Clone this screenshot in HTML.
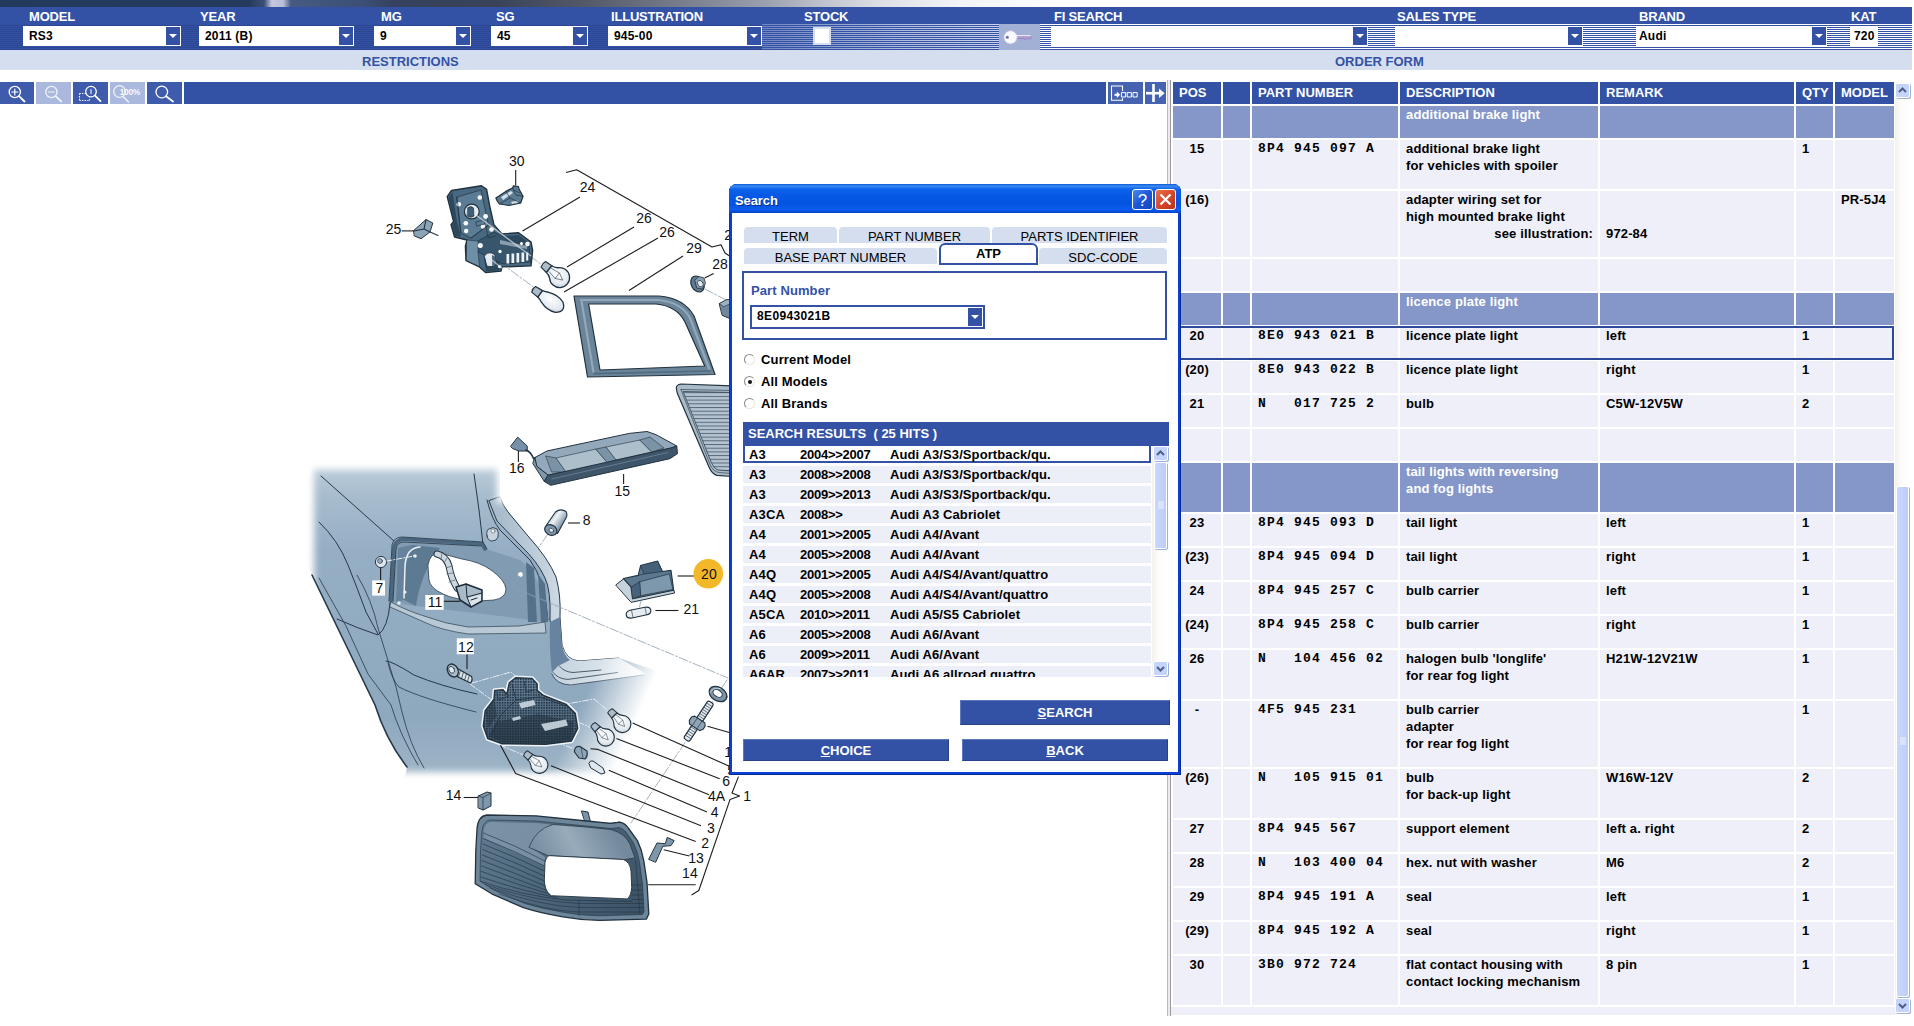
<!DOCTYPE html>
<html>
<head>
<meta charset="utf-8">
<title>Parts Catalogue</title>
<style>
*{box-sizing:border-box;margin:0;padding:0}
html,body{width:1914px;height:1026px;overflow:hidden;background:#fff}
body{position:relative;font-family:"Liberation Sans",sans-serif;font-weight:bold;font-size:12px;color:#000}
.abs{position:absolute}
/* ---------- header ---------- */
#topimg{left:0;top:0;width:1914px;height:7px;background:linear-gradient(90deg,#223a5c 0,#243b5e 13%,#3a4f74 13.8%,#c5c8de 14.2%,#b9bdd6 14.8%,#465a82 15.2%,#3c4f76 19%,#36425f 20.5%,#3a4358 26%,#555c6b 31%,#7d8494 36.5%,#9aa0ae 40%,#bfc3cd 43%,#dddfe5 46%,#f2f3f6 50%,#fff 56%)}
#hbar{left:0;top:7px;width:1912px;height:43px;background:#3352a6}
#stripeL{left:0;top:24px;width:762px;height:26px;background:repeating-linear-gradient(180deg,#3352a6 0,#3352a6 1px,#2c4792 1px,#2c4792 2px)}
#stripeFade{left:762px;top:24px;width:278px;height:26px;background:repeating-linear-gradient(180deg,#fff 0,#fff 1px,rgba(255,255,255,0) 1px,rgba(255,255,255,0) 2px);-webkit-mask-image:linear-gradient(90deg,rgba(0,0,0,.3) 0,rgba(0,0,0,.62) 50%,rgba(0,0,0,.8) 100%);mask-image:linear-gradient(90deg,rgba(0,0,0,.3) 0,rgba(0,0,0,.62) 50%,rgba(0,0,0,.8) 100%)}
#stripeR{left:1040px;top:24px;width:872px;height:26px;background:repeating-linear-gradient(180deg,#fff 0,#fff 1px,#3352a6 1px,#3352a6 2px)}
.hl{position:absolute;top:10px;height:14px;line-height:14px;color:#fff;font-size:13px;letter-spacing:-.2px;white-space:nowrap}
.sel{position:absolute;top:26px;height:20px;background:#fff;font-size:12px;line-height:20px;padding-left:6px;letter-spacing:.2px;white-space:nowrap}
.dd{position:absolute;right:1px;top:1px;width:14px;height:18px;background:#3352a6}
.dd:after{content:"";position:absolute;left:3px;top:7px;border:4px solid transparent;border-top:4px solid #fff;border-bottom:0}
#lbar{left:0;top:50px;width:1912px;height:20px;background:#d5deef}
.ll{position:absolute;top:54px;height:15px;line-height:15px;color:#3352a6;font-size:13px;white-space:nowrap}
/* ---------- toolbar ---------- */
#tbar{left:184px;top:82px;width:922px;height:22px;background:#3352a6}
.tb{position:absolute;top:82px;height:22px;width:35px;background:#3e5cab}
.tb.dis{background:#a9b8dc}
#split{left:1167px;top:80px;width:4px;height:936px;background:linear-gradient(90deg,#bcbcc0 0,#bcbcc0 1px,#ece9f1 1px,#ece9f1 3px,#9b9b9f 3px)}
/* ---------- table ---------- */
#pt{position:absolute;left:1171px;top:80px;border-collapse:separate;border-spacing:2px;table-layout:fixed;width:725px;font-size:13px;letter-spacing:.15px}
#pt th{background:#3352a6;color:#fff;height:22px;text-align:left;padding-left:6px;font-size:13px;line-height:22px;letter-spacing:0;white-space:nowrap;overflow:hidden}
#pt td{background:#eeeff8;vertical-align:top;line-height:17px;padding:0 0 0 6px;white-space:nowrap;overflow:hidden}
#pt tr.g td{background:#8597c8;color:#fff}
#pt td.c{text-align:center;padding:0}
#pt td.pn{font-family:"Liberation Mono",monospace;font-size:13px;letter-spacing:1.2px;padding-top:0}
#pt .ra{display:block;text-align:right;padding-right:5px}
#selrow{left:1172px;top:326px;width:722px;height:34px;border:2px solid #2c4a9c}
#tfoot{left:1171px;top:1007px;width:725px;height:8px;background:#eeeff8}
/* scrollbar */
#sbt{left:1895px;top:82px;width:15px;height:932px;background:linear-gradient(90deg,#f3f1ec,#fdfcfa 40%,#fff)}
.sbb{position:absolute;left:1895px;width:15px;height:15px;background:#c4d4fb;border:1px solid #fff;border-radius:2px;box-shadow:1px 1px 0 #9fb1d6}
#sth{left:1896px;top:486px;width:13px;height:511px;background:linear-gradient(90deg,#cad8fd,#bdcdf9);border:1px solid #fff;border-radius:2px;box-shadow:1px 1px 0 #9fb1d6}
/* ---------- dialog ---------- */
#dlg{left:729px;top:184px;width:452px;height:591px;background:#0a3fd6;border-radius:8px 8px 0 0;box-shadow:inset 1px 0 0 #0831c9,inset -1px 0 0 #00299f,inset 0 -1px 0 #00299f}
#dtitle{left:0;top:0;width:452px;height:29px;border-radius:8px 8px 0 0;background:linear-gradient(180deg,#0a56d6 0,#3c8cf4 7%,#0c62ea 18%,#0557e4 45%,#0454e0 70%,#0a5cf0 88%,#0444c8 100%)}
#dtitle span{position:absolute;left:6px;top:9px;color:#fff;font-size:13px;line-height:16px;letter-spacing:-.1px;text-shadow:1px 1px 0 #0a2c86}
#dcli{left:3px;top:29px;width:446px;height:559px;background:#fff}
.wb{position:absolute;top:5px;width:21px;height:21px;border:1px solid #fff;border-radius:3px}
.tab{position:absolute;height:16px;background:#d5deef;border-radius:4px 4px 0 0;font-weight:normal;font-size:13px;line-height:19px;text-align:center;color:#000;white-space:nowrap;overflow:hidden}
#tabsel{left:939px;top:243px;width:99px;height:22px;background:#fff;border:2px solid #3352a6;border-radius:6px 6px 0 0;font-size:13px;line-height:17px;text-align:center}
#pnl{left:742px;top:271px;width:425px;height:69px;border:2px solid #3352a6;background:#fff}
#cmb{left:750px;top:305px;width:235px;height:24px;border:2px solid #3352a6;background:#fff;font-size:12px;letter-spacing:.35px;line-height:19px;padding-left:5px}
.rad{position:absolute;left:744px;width:11px;height:11px;border-radius:50%;border:1px solid #8a8a86;border-right-color:#e8e6dd;border-bottom-color:#e8e6dd;background:#fff}
.rl{position:absolute;left:761px;font-size:13px;line-height:16px;letter-spacing:.15px;white-space:nowrap}
#srh{left:743px;top:422px;width:426px;height:24px;background:#3352a6;color:#fff;font-size:13px;line-height:23px;padding-left:5px;white-space:pre}
#lst{left:743px;top:446px;width:408px;height:231px;overflow:hidden;background:#fff}
.li{position:absolute;left:0;width:408px;height:17px;background:#edeff8;font-size:13px;line-height:17px;white-space:nowrap}
.li b{position:absolute;top:0;font-weight:bold}
.li b.a{left:6px;letter-spacing:.2px}.li b.b{left:57px;letter-spacing:-.25px}.li b.c{left:147px;letter-spacing:.1px}
.li.s{background:#fff;border:2px solid #3352a6;height:19px;margin-top:-2px}
.li.s b{top:0}.li.s b.a{left:4px}.li.s b.b{left:55px}.li.s b.c{left:145px}
.btn{position:absolute;height:23px;background:#3352a6;color:#fff;font-size:13px;line-height:23px;text-align:center;border:1px solid #5d78bd;border-right-color:#26408a;border-bottom-color:#26408a}
.btn u{text-decoration:underline}
#lsb{left:1152px;top:446px;width:16px;height:231px;background:linear-gradient(90deg,#f3f1ec,#fdfcfa 40%,#fff)}
.sbb2{position:absolute;left:1153px;width:15px;height:15px;background:#c4d4fb;border:1px solid #fff;border-radius:2px;box-shadow:1px 1px 0 #9fb1d6}

</style>
</head>
<body>
<!-- HEADER -->
<div id="topimg" class="abs"></div>
<div id="hbar" class="abs"></div>
<div id="stripeL" class="abs"></div>
<div id="stripeFade" class="abs"></div>
<div id="stripeR" class="abs"></div>
<div class="hl" style="left:29px">MODEL</div>
<div class="hl" style="left:200px">YEAR</div>
<div class="hl" style="left:381px">MG</div>
<div class="hl" style="left:496px">SG</div>
<div class="hl" style="left:611px">ILLUSTRATION</div>
<div class="hl" style="left:804px">STOCK</div>
<div class="hl" style="left:1054px">FI SEARCH</div>
<div class="hl" style="left:1397px">SALES TYPE</div>
<div class="hl" style="left:1639px">BRAND</div>
<div class="hl" style="left:1851px">KAT</div>
<div class="sel" style="left:23px;width:158px">RS3<i class="dd"></i></div>
<div class="sel" style="left:199px;width:155px">2011 (B)<i class="dd"></i></div>
<div class="sel" style="left:374px;width:97px">9<i class="dd"></i></div>
<div class="sel" style="left:491px;width:97px">45<i class="dd"></i></div>
<div class="sel" style="left:608px;width:154px">945-00<i class="dd"></i></div>
<div class="abs" style="left:813px;top:27px;width:18px;height:18px;background:#fff;border:2px solid #d6def0"></div>
<div class="abs" id="keybox" style="left:999px;top:24px;width:41px;height:26px;background:#a3b0d6"></div>
<div class="sel" style="left:1051px;width:317px"><i class="dd" style="top:1px;right:1px"></i></div>
<div class="sel" style="left:1395px;width:188px"><i class="dd"></i></div>
<div class="sel" style="left:1636px;width:191px;padding-left:3px">Audi<i class="dd"></i></div>
<div class="sel" style="left:1850px;width:28px;padding-left:4px">720</div>
<div id="lbar" class="abs"></div>
<div class="ll" style="left:362px">RESTRICTIONS</div>
<div class="ll" style="left:1335px">ORDER FORM</div>
<!-- TOOLBAR -->
<div class="tb" style="left:0;width:34px"></div>
<div class="tb dis" style="left:36px"></div>
<div class="tb" style="left:73px"></div>
<div class="tb dis" style="left:110px"></div>
<div class="tb" style="left:147px"></div>
<div id="tbar" class="abs"></div>
<div id="split" class="abs"></div>
<div class="tb" style="left:1108px;width:35px;background:#4563b0"></div>
<div class="tb" style="left:1145px;width:21px;background:#4563b0"></div>
<svg class="abs" style="left:0;top:82px" width="1168" height="22" viewBox="0 82 1168 22" fill="none" stroke="#fff" stroke-width="1.3" stroke-linecap="round">
<circle cx="14.8" cy="92" r="5.6"/><path d="M19 96.2 L24.5 101.5" stroke-width="1.8"/><path d="M11.8 92h6M14.8 89v6" stroke-width="1.2"/>
<g stroke="#eef2fa"><circle cx="51.4" cy="92" r="5.6"/><path d="M55.6 96.2 L61.2 101.5" stroke-width="1.8"/><path d="M48.4 92h6" stroke-width="1.2"/></g>
<path d="M79.5 93.5h7M79.5 93.5v7M79.5 100.5h10M89.5 100.5v-3" stroke-dasharray="1.3 1.3" stroke-width="1.1" stroke-linecap="butt"/><circle cx="91" cy="91.6" r="5.3"/><path d="M95 95.6 L100.5 101.2" stroke-width="1.8"/><path d="M91 89.5v4.2" stroke-width="1"/>
<g stroke="#eef2fa"><circle cx="119.5" cy="91.5" r="5.8"/><path d="M123 96.5 L128.5 102" stroke-width="1.6"/></g>
<text x="119.8" y="94.6" font-family="Liberation Sans,sans-serif" font-size="8.4" font-weight="bold" fill="#f7f9fd" stroke="none" letter-spacing="-.35">100%</text>
<circle cx="161.8" cy="92" r="5.8"/><path d="M166 96.2 L173 101.5" stroke-width="1.8"/>
<!-- right buttons -->
<path d="M1122.5 91v-5h-11v14.3h11v-2" stroke-width="1.1" stroke-linecap="butt"/><path d="M1114.5 94.8h3" stroke-width="2" stroke-linecap="butt"/><path d="M1116.8 91.6l3.4 3.2l-3.4 3.2z" fill="#fff" stroke="none"/>
<path d="M1121.8 92.6h3.8v4.4h-3.8zM1127.6 92.6h3.8v4.4h-3.8zM1133.4 92.6h3.8v4.4h-3.8z" stroke-width="1"/>
<path d="M1153.5 84v18" stroke-width="2.6" stroke-linecap="butt"/><path d="M1146 93.2h14" stroke-width="2.6" stroke-linecap="butt"/><path d="M1159 88.4l5.6 4.8l-5.6 4.8z" fill="#fff" stroke="none"/>
</svg>
<!-- key icon -->
<svg class="abs" style="left:999px;top:24px" width="41" height="26" viewBox="0 0 41 26">
<path d="M17 12.5h14.5l1.2 1.2l-1.2 1.3h-2l-1-.9l-1.3 1.2h-1.6l-.9-.8h-7.7z" fill="#b79ad6" stroke="#7d6aa8" stroke-width=".5"/>
<circle cx="11.5" cy="13.3" r="6.6" fill="#fbfaff" stroke="#c9bfe4" stroke-width=".8"/><path d="M16 11.2h15l1 1h-16z" fill="#fff"/>
<circle cx="8.3" cy="13.3" r="1.5" fill="#6b6f9c"/>
</svg>

<svg id="ill" class="abs" style="left:0;top:104px" width="1168" height="922" viewBox="0 104 1168 922" font-family="Liberation Sans,sans-serif" font-weight="normal" font-size="14" fill="none" stroke-linejoin="round" stroke-linecap="round">
<defs>
<filter id="bl6" x="-10%" y="-10%" width="120%" height="120%"><feGaussianBlur stdDeviation="3.6"/></filter>
<filter id="bl3" x="-20%" y="-20%" width="140%" height="140%"><feGaussianBlur stdDeviation="2.5"/></filter>
<filter id="bl1" x="-20%" y="-20%" width="140%" height="140%"><feGaussianBlur stdDeviation="1"/></filter>
<linearGradient id="gBody" x1="0" y1="462" x2="0" y2="780" gradientUnits="userSpaceOnUse">
<stop offset="0" stop-color="#c0d0dd"/><stop offset=".1" stop-color="#a8bdce"/><stop offset=".28" stop-color="#95aec4"/><stop offset=".8" stop-color="#8ea8be"/><stop offset="1" stop-color="#a0b6c8"/>
</linearGradient>
<linearGradient id="gPil" x1="500" y1="0" x2="570" y2="0" gradientUnits="userSpaceOnUse"><stop offset="0" stop-color="#a9bccc"/><stop offset="1" stop-color="#d3dde6"/></linearGradient>
<linearGradient id="gCyl" x1="549" y1="514" x2="563" y2="524" gradientUnits="userSpaceOnUse"><stop offset="0" stop-color="#8ca2b5"/><stop offset=".45" stop-color="#eef3f7"/><stop offset="1" stop-color="#7b93a8"/></linearGradient>
<linearGradient id="gSill" x1="555" y1="0" x2="640" y2="0" gradientUnits="userSpaceOnUse"><stop offset="0" stop-color="#c4d2dd"/><stop offset=".6" stop-color="#dbe4eb"/><stop offset="1" stop-color="#f4f7f9"/></linearGradient>
<linearGradient id="gLens" x1="480" y1="820" x2="640" y2="920" gradientUnits="userSpaceOnUse"><stop offset="0" stop-color="#607a8f"/><stop offset=".5" stop-color="#4b6579"/><stop offset="1" stop-color="#3a5265"/></linearGradient>
<linearGradient id="gDome" x1="530" y1="870" x2="610" y2="825" gradientUnits="userSpaceOnUse"><stop offset="0" stop-color="#6a8397"/><stop offset=".55" stop-color="#97abbb"/><stop offset="1" stop-color="#73899c"/></linearGradient>
<radialGradient id="gBulb" cx=".4" cy=".4" r=".7"><stop offset="0" stop-color="#fff"/><stop offset=".7" stop-color="#e3eaf0"/><stop offset="1" stop-color="#b9c7d3"/></radialGradient>
<g id="bulb"><path fill="#aebcc8" stroke="#22323f" stroke-width="1.2" d="M-21 -3.6 Q-22.5 0 -21 3.6 L-13.5 4.3 L-13.5 -4.3Z"/><path fill="url(#gBulb)" stroke="#22323f" stroke-width="1.3" d="M-13.5 -4.3 Q-10 -4.5 -7.5 -6.6 A10 10 0 1 1 -7.5 6.6 Q-10 4.5 -13.5 4.3Z"/><path stroke="#22323f" stroke-width=".55" fill="none" d="M-12 -2 L-3 -3.5 L4 0 L-3 3.5 L-12 2 M-3 -3.5 L-3 3.5"/></g>
<pattern id="pDot" width="2.6" height="2.6" patternUnits="userSpaceOnUse"><rect width="2.6" height="2.6" fill="#6a869d"/><rect x="0" y="0" width="1.5" height="1.5" fill="#1c2c3a"/></pattern>
<linearGradient id="gCar" x1="0" y1="678" x2="0" y2="745" gradientUnits="userSpaceOnUse"><stop offset="0" stop-color="#1c2c3a" stop-opacity="0"/><stop offset=".5" stop-color="#1c2c3a" stop-opacity=".25"/><stop offset="1" stop-color="#1c2c3a" stop-opacity=".6"/></linearGradient>
<pattern id="pGrl" width="4" height="3.7" patternUnits="userSpaceOnUse"><rect width="4" height="3.7" fill="#b4c3cf"/><rect y="0" width="4" height="1" fill="#566a7b"/></pattern>
<linearGradient id="gFadeR" x1="578" y1="712" x2="630" y2="735" gradientUnits="userSpaceOnUse"><stop offset="0" stop-color="#000" stop-opacity="0"/><stop offset="1" stop-color="#000" stop-opacity="1"/></linearGradient>
<mask id="mBody" maskUnits="userSpaceOnUse" x="290" y="440" width="420" height="360">
<path filter="url(#bl6)" fill="#fff" d="M314 469.5 L497 469.5 L497 503 L700 503 L700 772 L314 772Z"/>
<path fill="url(#gFadeR)" d="M560 664 L700 640 L700 800 L540 800Z"/>
</mask>
</defs>
<!-- car body -->
<g mask="url(#mBody)">
<path fill="url(#gBody)" d="M300 455 L500 455 L500 497 Q503 506 508 512 L528 536 Q548 558 556 577 Q561 595 560 617 L562 645 Q566 660 579 661 L619 658 L660 672 L660 800 L400 800 L407 767 Q386 740 375 705 L312 575 L298 546Z"/>
<!-- C pillar light band -->
<path fill="url(#gPil)" stroke="#2a3b4b" stroke-width="1" d="M500 497 Q503 506 508 512 L528 536 Q548 558 556 577 Q561 595 560 617 L562 645 Q566 660 579 661 L619 658 L619 664 L585 668 Q562 668 556 650 L550 620 Q551 590 545 578 Q538 562 520 545 L497 521 L489 501Z"/>
<!-- trunk sill faces -->
<path fill="url(#gSill)" d="M562 645 Q566 660 579 661 L619 658 L646 674 L571 685.5 Q556 684 551.5 673 L556 660Z"/>
<path fill="#6783a0" d="M550 622 L560 617 L562 645 Q564 656 570 660 L558 666 L552 672.5 Q549 650 550 622Z"/>
<path stroke="#2a3b4b" stroke-width=".8" fill="none" d="M559.3 666 Q564 672 573 672.5 L601 670 M553 672.5 Q558 679 568 679.4 L617.6 672.5 M551.7 673.7 Q556 684.5 570.7 685 L644 675"/>
</g>
<g stroke="#27384a" stroke-width="1">
<!-- body lines -->
<path d="M321 476 L394 541"/>
<path d="M319 522 Q338 540 348 565 Q358 590 366 612 L378 634"/>
<path d="M312 575 L375 705 Q386 740 407 767" stroke-width="1.6"/>
<path d="M319 578 L346 626 L368 674 L391 705 Q400 735 418 765" stroke-width=".8"/>
<path d="M337 619 Q357 628 378 635 Q388 628 390 603"/>
<path d="M357 575 Q372 600 378 628 L386 654 L396 687 L402 712 Q410 745 424 768" stroke-width=".8"/>
<path d="M386 661 Q392 661 414 675 Q440 686 477 694"/>
<path d="M388 663 Q392 680 399 687 Q420 698 476 712" stroke-width=".8"/>
<path d="M474 474 L479 510 L483 544"/>
<path d="M487 500 Q492 520 500 530 L530 560 Q545 580 548 620"/>
</g>
<!-- light opening -->
<path fill="#819bb3" d="M394 545 Q396 539 403 538 L483 543 L486 549 L520 560 Q545 580 548 622 L392 603Z"/>
<path fill="#67839c" d="M398 548 L412 545 Q402 570 404 600 L396 602Z"/>
<path fill="#5d7a93" d="M412 545 L440 548 Q420 575 416 606 L404 600 Q402 570 412 545Z"/>
<path fill="#55718a" d="M526 562 L534 568 L537 622 L528 622Z M538 574 L545 584 L548 622 L541 622Z"/>
<path stroke="#4b677f" stroke-width="3.6" d="M391 601 L394 547 Q396 540 403 539 L482 544 L485 549"/>
<path stroke="#22323f" stroke-width=".8" d="M389 601 L392 545 Q394 537 402 537 L483 542 L487 549 M393 601 L396 549 Q397 542 404 542 L481 546"/>
<path stroke="#e9eff4" stroke-width="1.5" d="M404 598 L405 566 Q406 548 420 547"/>
<!-- sill of opening -->
<path fill="#b9c8d5" stroke="#30424f" stroke-width=".7" d="M391 602 Q405 610 424 616 Q445 624 468 627 L519 626 L545 622 L546 633 L468 634 Q440 630 424 622 L390 607Z"/>
<!-- white hole -->
<path fill="#fff" stroke="#2c3e4d" stroke-width=".8" d="M428 565 Q430 553 439 553 L462 559 Q480 562 491 570 Q505 580 506 589 Q506 598 494 600 L479 601 Q455 600 443 594 Q430 588 429 580Z"/>
<circle cx="520.5" cy="574.5" r="2.8" fill="#fff" stroke="#7088a0" stroke-width=".6"/>
<circle cx="415" cy="556" r="1.8" fill="#e8eef3"/><circle cx="405" cy="592" r="1.6" fill="#e8eef3"/><circle cx="399" cy="603" r="1.8" fill="#e8eef3"/>
<!-- cable + connector 11 -->
<path stroke="#22323f" stroke-width="7" d="M437 554 Q446 556 449 566 Q451 578 457 588"/>
<path stroke="#cdd7df" stroke-width="5" d="M437 554 Q446 556 449 566 Q451 578 457 588"/>
<path stroke="#5b6f80" stroke-width=".8" d="M442 553 L441 559 M447 558 L444 563 M452 566 L446 568 M453 573 L447 574 M455 580 L449 582"/>
<path fill="#a9bac8" stroke="#1c2a37" stroke-width="1.5" d="M456 587 L466 584 L482 590 L482 601 L471 607 L460 600Z"/><path fill="#dbe4eb" stroke="none" d="M467.5 598 L481 594 L481 600.5 L471.3 606Z"/>
<path stroke="#1c2a37" stroke-width="1" d="M466 584 L467 597 L471 607 M467 597 L482 593 M471 600 L477 598"/>
<!-- rubber stop -->
<path fill="#c8d3dd" stroke="#2a3b4b" stroke-width=".9" d="M487 536 Q486 530 489 529 Q493 526 497 529 Q499 532 498 537 Q497 541 492 541 Q488 541 487 536Z"/>
<circle cx="493" cy="531" r="2" fill="#eef2f6" stroke="#4a5f72" stroke-width=".6"/>
<!-- part 7 -->
<circle cx="381" cy="562" r="5.6" fill="#dfe7ee" stroke="#27384a" stroke-width="1"/><circle cx="380" cy="561" r="2.4" fill="#9eb1c2" stroke="#27384a" stroke-width=".7"/>
<path stroke="#e9eff4" stroke-width="1" stroke-dasharray="5 2 1 2" d="M387 561 L414 556"/>
<!-- long axis dash-dot -->
<g stroke="#8c9fb0" stroke-width=".8" stroke-dasharray="9 2 2 2">
<path d="M520 576 L512 587 L728 678"/>
<path d="M727 680 L631 823"/>
<path d="M470 211 L542 265 M487 253 L539 291 M705 289 L728 301"/>
<path d="M548 534 L539 547"/>
</g>
<g stroke="#eef3f7" stroke-width=".9" stroke-dasharray="6 2 1 2"><path d="M472 683 L511 672 L530 690 M470 684 L500 706 M561 705 L594 699 L612 714 M578 722 L596 730 M500 745 L528 757 M556 742 L577 750"/></g>
<!-- ===== top parts ===== -->
<g stroke="#22323f" stroke-width="1">
<!-- bulb holder 24 -->
<path fill="#486981" stroke-width="1.4" d="M447.2 196.7 L451.5 190.5 L481.5 185.8 L486.6 189.4 L489.7 206 L493.9 224.6 L502 233.9 L518.6 232.8 L531 242 L532.6 250.4 L531 265.9 L502 266.9 L501 271 L485.6 272.6 L479.4 266.9 L466 260.7 L465.4 246.2 L467 240 L454.6 237 L451 224.6 L453.6 221.5Z"/>
<path fill="#2c485d" stroke="none" d="M448.5 197.5 L452.5 192 L457 222 L461 236.5 L455 236 L451.5 224.5 L454 221.5Z M466 246 L477 250 L478 264 L466.5 260Z M484 259 L500 258 L499.5 270.5 L486 271.5Z M503 236 L519 235 L529 243 L512 245Z"/>
<path fill="#5a7c95" stroke-width=".7" d="M457 197 L481 190 L488.5 225 L471 238 L461 233Z"/>
<path fill="#37566d" stroke-width=".7" d="M478 241 L494 232 L502 236 L512 245 L529 244 L530.5 262 L503 264 L478 252Z"/>
<path fill="#6f8fa7" stroke-width=".6" d="M467 240 L478 241 L478 252 L479.5 266.5 L466.5 260.5Z"/>
<path fill="#eef3f7" stroke="none" d="M506.5 254h2.7v9.5h-2.7z M511.5 253.5h2.7v9.5h-2.7z M516.5 253h2.7v9.5h-2.7z M521.5 252.5h2.7v9.5h-2.7z M526.2 252.5h2v8h-2z"/>
<path fill="#c3d0da" stroke="none" d="M500 240 L527 246 L527 249 L500 244Z" opacity=".6"/>
<circle cx="471.8" cy="211.5" r="7.4" fill="#e4ebf1" stroke-width="1.2"/><path fill="#3e5f77" stroke-width=".7" d="M468 207.5 q3.5 -2 5.5 .5 l.5 8 q-3 2.5 -6.5 0z"/>
<g fill="#fff" stroke="none"><circle cx="458.8" cy="204.3" r="2.3"/><circle cx="479.8" cy="197.5" r="2.3"/><circle cx="485.6" cy="216.5" r="2.4"/><circle cx="465.8" cy="223.3" r="2.3"/><circle cx="466.2" cy="231" r="2.2"/><circle cx="483" cy="226.5" r="2.3"/><circle cx="491.5" cy="229.5" r="2.3"/><circle cx="480.3" cy="245.5" r="2.5"/><circle cx="500" cy="251.5" r="1.7"/><circle cx="527.5" cy="244" r="2.3"/><circle cx="499.5" cy="266.5" r="1.6"/><circle cx="521.5" cy="243.5" r="1.5"/></g>
<path fill="#e4ebf1" stroke-width=".9" d="M484.5 256 q2 -4 7.5 -3 l3 2 l1 9 q-3 4 -9 2z"/><path fill="#46667e" stroke="none" d="M492 255 l3 1.5 l.8 8 l-3.5 1.5z"/>
<path stroke-width=".7" fill="none" d="M471 238 L488.5 225 M461 233 L457 197 M486 226 L488 238 L496 236 M476 222 L484 220 L485 224 L477 226Z"/>
<path stroke="#dfe7ed" stroke-width="1.3" stroke-opacity=".7" fill="none" stroke-linecap="butt" d="M474 213.5 L531 256 M491 259.5 L502 268"/>
<!-- clip 25 -->
<path fill="#8da3b6" d="M413.8 230.4 L426 219.6 L432.8 223 L430 232 L421 238.7 L414.6 236Z"/><path d="M426 219.6 L424 229 L430 232 M424 229 L414 231 M430 232 L438 235.5" stroke-width="1.1"/>
<!-- connector 30 -->
<path fill="#5a7a92" stroke-width="1.2" d="M495.8 198 L499 196 L505.8 191.4 L512.5 188 L513.5 185.8 L518.5 186.5 L519 189 L523 196.4 L520.7 203 L509 205.5 L499.5 204 L497.5 201.5Z"/><path fill="#d5dfe7" stroke="none" d="M501 197 L511 191 L513 193 L503 200Z M511 202 L518 200.5 L518.5 202.5 L512 204Z"/><path stroke-width=".7" fill="none" d="M505.8 191.4 L510 198 L520.7 203 M510 198 L499.5 204 M512.5 188 L516 195 L523 196.4 M514 190 L519.5 193"/>
<!-- bulbs 26 -->
<use href="#bulb" transform="translate(559.6 277.6) rotate(39)"/>
<g transform="translate(552.5 302.5) rotate(35)"><path fill="#aebcc8" stroke-width="1.2" d="M-23 -3.4 Q-24.5 0 -23 3.4 L-15 4 L-15 -4Z"/><path fill="url(#gBulb)" stroke-width="1.3" d="M-15 -4 Q-12 -4.5 -9 -6.2 Q0 -9.8 8 -6.5 Q12.5 -3.5 12.5 0 Q12.5 3.5 8 6.5 Q0 9.8 -9 6.2 Q-12 4.5 -15 4Z"/></g>
<!-- seal 29 -->
<path fill="#6a8499" stroke-width="1.2" fill-rule="evenodd" d="M574 296 L659 296 Q684 298 694 316 L715 374.5 L587.5 377Z M588.6 304 L656 304 Q677 306 685 322 L704.7 366 L600 370Z"/>
<path stroke="#93a8b9" stroke-width="2.2" fill="none" stroke-linecap="butt" d="M581.5 301 L593.5 372.5 M580 300 L658 300 Q681 302 690 318 L709.5 369.5"/>
<path stroke="#516b80" stroke-width="1.6" fill="none" d="M594 373.6 L710 371"/>
<!-- nut 28 -->
<ellipse cx="697.5" cy="284" rx="6.2" ry="8.4" transform="rotate(-28 697.5 284)" fill="#5f7a92" stroke-width="1.2"/><path fill="#8aa0b3" stroke-width=".8" d="M695 280 L699 276.5 L704 278 L705.5 283.5 L702 289 L697 288Z"/><ellipse cx="700.3" cy="283.6" rx="2.6" ry="3.4" transform="rotate(-28 700.3 283.6)" fill="#e3eaf0" stroke-width=".7"/>
<path fill="#71889b" d="M719.5 303.5 L727 299.5 L732 300 L732 319.5 L722.5 315.5Z"/><path fill="#9fb0be" stroke-width=".6" d="M719.5 303.5 L727 299.5 L732 300 L732 303 L724 306.5Z"/>
<!-- high mounted brake light 15 -->
<path fill="#93a9bb" d="M534.9 457.5 L546.9 451 L629.3 433.4 L647 431.5 L655.9 434.6 L676.8 446 L671 448 L548.2 475.2 L536.8 466.3Z"/>
<path fill="#aebfcc" stroke-width=".6" d="M556 458 L596 449 L608 463 L566 472Z M606 447 L640 440 L652 452 L616 460Z"/>
<path fill="#7b93a7" stroke-width=".6" d="M596 449 L606 447 L616 460 L608 463Z M640 440 L650 437 L664 448 L652 452Z M546 456 L556 458 L566 472 L552 472Z"/>
<path fill="#7f97ab" d="M534.9 457.5 L536.8 466.3 L548.2 475.2 L544.4 481.5 L533 463.8Z"/>
<path fill="#3f566a" d="M548.2 475.2 L671 448 L676.8 446 L677.4 453.7 L669.8 458.7 L550.7 485.3 L544.4 481.5Z"/>
<path stroke="#7d93a6" stroke-width=".6" d="M552 479 L668 452.5"/>
<!-- connector 16 -->
<path fill="#7690a8" d="M510.8 446 L517.7 437.2 L527.2 446 L527.2 451 L519 451 L512.7 448.6Z"/><path d="M526 450 Q531 452 533.6 458.7" stroke-width="1.6"/>
<!-- grille part -->
<path fill="#a9bbc8" stroke-width="1.2" d="M676.3 388 Q676.5 384.5 681 384 L732 385.8 L732 476.5 L717 475.4 Q712 474 709 467 L677.2 393Z"/>
<path fill="url(#pGrl)" stroke-width=".7" d="M683.5 391.5 L732 392.5 L732 471 L718 470 Q714 469 711.5 463Z"/>
<path fill="none" stroke-width=".6" d="M681 389.5 L732 390.5 M681 389.5 L710 464.5 Q713 471.5 719 472.5 L732 473.5"/>
</g>
<!-- ===== middle parts ===== -->
<g stroke="#22323f" stroke-width="1">
<!-- part 8 -->
<path fill="url(#gCyl)" stroke-width="1.1" d="M546.5 525 L555.5 512 Q560.5 508 566 511.5 Q567.5 514 566.5 517 L557.5 533.5Z"/>
<ellipse cx="550.8" cy="530" rx="6.4" ry="5" transform="rotate(28 550.8 530)" fill="#7d96ab" stroke-width="1.2"/><ellipse cx="551.3" cy="530.3" rx="2.4" ry="1.9" transform="rotate(28 551.3 530.3)" fill="#e8eef3" stroke-width=".7"/>
<!-- licence plate light 20 -->
<path fill="#c6d3dd" stroke-width="1" d="M616 584.8 L623.4 579 L640 588 L674 590.5 L674.5 593 L631.5 602.3Z"/>
<path fill="#5b7890" stroke-width="1.1" d="M623.4 578.5 L638.2 575.4 L640.6 565.7 L657.7 561.4 L662.4 571.5 L671 570.4 L673.7 590.2 L632.8 598.8 L631.2 587.1Z"/>
<path fill="#7d98ad" stroke-width=".7" d="M639.8 581.7 L669.4 573.9 L672.9 589.5 L640.6 595.7Z"/>
<path fill="#46627a" stroke-width=".7" d="M631.2 587.1 L639.8 581.7 L640.6 595.7 L632.8 598.8Z M640.6 565.7 L644 574 L662.4 571.5 L657.7 561.4Z"/>
<path stroke-width=".7" d="M638.2 575.4 L644 574 M623.4 578.5 L631.2 587.1"/>
<!-- bulb 21 -->
<path fill="#e6ecf1" stroke-width="1.1" d="M626.3 615.5 Q625.5 611.5 630 610.2 L645 607.2 Q650 606.5 650.8 610 Q651.3 613.8 647 614.8 L632 618 Q627.2 618.8 626.3 615.5Z"/><path stroke-width=".6" d="M631.5 610 L633 617.6 M645 607.4 L646.5 614.8"/><path stroke="#7d93a6" stroke-width=".7" d="M641 601 L639.5 607"/>
<!-- washer + stud -->
<ellipse cx="718" cy="694" rx="9.6" ry="6.8" transform="rotate(32 718 694)" fill="#7d94a7" stroke-width="1.3"/><ellipse cx="717.6" cy="693.4" rx="5" ry="3.3" transform="rotate(32 717.6 693.4)" fill="#fff" stroke-width=".9"/><path stroke="#c4d0da" stroke-width="1" fill="none" d="M710.5 692 Q713 687 720 688.5"/>
<g transform="translate(697 723.6) rotate(-56.7)">
<rect x="-19.5" y="-3.4" width="45" height="6.8" rx="2" fill="#e1e8ee" stroke-width="1.1"/>
<path stroke-width=".6" d="M-16 -3.2v6.4M-13.5 -3.2v6.4M-11 -3.2v6.4M-8.5 -3.2v6.4M-6 -3.2v6.4M5 -3.2v6.4M7.5 -3.2v6.4M10 -3.2v6.4M12.5 -3.2v6.4M15 -3.2v6.4M17.5 -3.2v6.4M20 -3.2v6.4M22.5 -3.2v6.4"/>
<path fill="#8fa5b7" stroke-width="1.1" d="M-4.5 -6 L-1.5 -8.2 L2.5 -8.2 L5 -6 L5 6 L2.5 8.2 L-1.5 8.2 L-4.5 6Z"/><path stroke-width=".6" d="M-4.5 -2.8H5M-4.5 2.8H5"/>
</g>
</g>
<!-- ===== lower parts ===== -->
<g stroke="#22323f" stroke-width="1">
<!-- screw 12 -->
<path fill="#d9e2e9" stroke-width="1.2" d="M456.5 668 L471.5 676.5 Q473 680 470.5 683 L455 675.5Z"/><path stroke-width=".7" d="M460.5 670.3 L458.5 677.2 M463.5 672 L461.5 678.8 M466.5 673.7 L464.5 680.4 M469.3 675.3 L467.5 681.8"/>
<ellipse cx="452.8" cy="670.5" rx="5.2" ry="6.8" transform="rotate(-28 452.8 670.5)" fill="#aebdca" stroke-width="1.4"/><ellipse cx="451.6" cy="669.8" rx="2.6" ry="3.6" transform="rotate(-28 451.6 669.8)" fill="#e4ebf1" stroke-width=".8"/>
<!-- lamp carrier -->
<path fill="none" stroke="#eef3f7" stroke-width="4.5" d="M483.3 726 L485.2 710.7 L494 699.3 L494.7 690.4 L503 689.8 L506.8 694.2 L509.3 682.8 L515.6 677.7 L532.1 678.4 L537.2 684 L537.2 690.4 L543.5 695.5 L566.3 704.4 L575.2 713.2 L577.7 728.4 L571.4 741 L546 744.3 L501.7 743.7 L487.7 738.6Z"/>
<path fill="url(#pDot)" stroke-width="1.4" d="M483.3 726 L485.2 710.7 L494 699.3 L494.7 690.4 L503 689.8 L506.8 694.2 L509.3 682.8 L515.6 677.7 L532.1 678.4 L537.2 684 L537.2 690.4 L543.5 695.5 L566.3 704.4 L575.2 713.2 L577.7 728.4 L571.4 741 L546 744.3 L501.7 743.7 L487.7 738.6Z"/>
<path fill="url(#gCar)" stroke="none" d="M483.3 726 L485.2 710.7 L494 699.3 L494.7 690.4 L503 689.8 L506.8 694.2 L509.3 682.8 L515.6 677.7 L532.1 678.4 L537.2 684 L537.2 690.4 L543.5 695.5 L566.3 704.4 L575.2 713.2 L577.7 728.4 L571.4 741 L546 744.3 L501.7 743.7 L487.7 738.6Z"/>
<path fill="#1c2c3a" fill-opacity=".45" stroke="none" d="M496 722 L538 714 L574 722 L571 740 L546 743 L502 742 L489 736Z M486 712 L494 700 L497 716 L488 728Z"/>
<path fill="#d5e0e9" fill-opacity=".85" stroke="none" d="M541 724 L566 719.5 L568 725.5 L545 731Z M519 703 L534 700 L535.5 705 L521 708.5Z M512 718 L520 716 L521 719 L513 721Z"/>
<path stroke-width=".8" d="M497 692 L498 700 L509 696 M512 684 L516 700 L540 697 M516 700 L500 716 M540 697 L566 706 M500 716 L492 734 M524 681 L526 692 L534 690"/>
<!-- bulbs -->
<use href="#bulb" transform="translate(622.3 724) rotate(47) scale(.86)"/>
<use href="#bulb" transform="translate(605.8 737.5) rotate(45) scale(.86)"/>
<use href="#bulb" transform="translate(539.3 764.8) rotate(40) scale(.86)"/>
<path fill="#8ea4b7" stroke-width="1.2" d="M574.5 752 Q574 746 580 746.5 L587 751 Q588 756 585 759 L579 758Z"/><path stroke-width=".6" d="M581 747 L583 758"/>
<path fill="#dfe7ee" d="M589 763 Q590 760 593 761 L603 768 L605 773 L601 774 L591 768Z"/>
<!-- block 14 -->
<path fill="#7f97ab" d="M478.4 796 L487 792 L491 793 L491 806 L483 810 L478.4 808Z"/><path stroke-width=".7" d="M478.4 796 L483 797.5 L491 793 M483 797.5 L483 810"/>
<!-- part 13 -->
<path fill="#7f97ab" d="M648.8 859 L657 843 L665.3 843.7 L667.2 837.4 L674.2 840.6 L671 845.6 L662.8 846.3 L655.8 862Z"/>
</g>
<!-- ===== tail lamp lens ===== -->
<g stroke="#22323f" stroke-width="1">
<path fill="#7a92a7" d="M581.7 811 L588 812 L590.5 822 L596 823 L611 823.4 L619.7 822.2 L600 826 L586 824Z"/>
<path fill="#6c8599" stroke-width="1.3" d="M477 829 Q478 816 487 815 L536 815.8 L586.7 821 L610.8 823.4 L619.7 822.2 Q625 823 628.6 828.5 L637.4 840.6 Q642 850 643.8 860.8 L647 882.4 L648.8 914 L646.3 919.1 L599.4 920.4 Q580 920 561.4 916.6 Q540 913 523.4 907.7 L491.7 893.8 L475.2 883.7 L475.8 850.7Z"/>
<path fill="url(#gLens)" stroke-width=".6" d="M482 831 Q483 821 490 820 L536 821 L586 826 L611 828.5 L619 827.5 Q623 828.5 626 832 L633.5 843 Q638 852 639.5 862 L642.5 884 L644 911 L642.5 914.5 L599.4 915.8 Q580 915.5 562 912 Q541 908.5 525 903.5 L494 890 L480 881 L480.5 851Z"/>
<path fill="#8299ac" stroke="none" d="M483.5 831 Q484.5 823 491 822 L536 823 L551 824.5 Q535 833 529.5 846.5 L545 857 L544.3 866 L483.5 838Z" opacity=".8"/>
<path fill="url(#gDome)" stroke-width=".7" d="M529 847 Q536 829 553 824.5 L586 827 L611 829.5 Q624 833 629.5 843 L635 858 L624 859.6 L548.7 855.8Z"/>
<path fill="#fff" stroke-width=".9" d="M548.7 855.8 Q546 857 545 862 L544.3 881 Q545 892 551.3 895.7 L627.3 898.9 Q631 896 631.7 887.5 L631 871 Q630 862 623.5 859.6Z"/>
<path stroke="#1f2f3d" stroke-width=".6" fill="none" d="M483.5 833 Q515 845 545 861 M483.3 838.5 Q515 851 544.6 866 M483 844 Q515 856.5 544.3 871 M482.7 849.5 Q515 862 544.3 876 M482.4 855 Q515 867.5 544.5 881 M482 860.5 Q515 873 545.5 886 M481.7 866 Q515 878.5 547 890.5 M481.4 871.5 Q515 884 549.5 894 M481.1 877 Q520 890.5 556 897.5 M481 881.5 Q522 895.5 566 900 L632 901.5"/>
<path stroke="#1f2f3d" stroke-width=".5" fill="none" d="M490 888 Q540 906 579 907.5 L643.5 907.5 M499 894 Q545 911 579 912 L643.8 912 M486 885 Q535 901.5 579 903.5 L643 903.5 M579 900.5 L579 915.5 M635.5 860 L640 914 M632 899.5 L642.8 899.5 M632 895 L642.5 895 M632 890 L642.3 890 M631.8 885 L642 885"/>
</g>

<!-- ===== leader lines ===== -->
<g stroke="#1d1d1f" stroke-width="1.1" stroke-linecap="butt">
<path d="M566 172.5 L576.7 169.7 L712 247 L721 244.7 L725 253 L731 257"/>
<path d="M522.5 231 L580 197"/><path d="M567 267 L634 227"/><path d="M564 292 L658 238"/><path d="M629 290.5 L683 256"/>
<path d="M515.7 170 L515.7 185.6"/><path d="M401.7 230.9 L413.8 230.9"/><path d="M704.7 278 L713.7 273.5"/>
<path d="M518.4 451 L518.4 462"/><path d="M623.6 474 L623.6 484"/><path d="M568 523 L580 523"/>
<path d="M677.6 576 L694 576"/><path d="M655.4 610.5 L678.4 610.5"/>
<path d="M380.6 580 L380.6 568"/><path d="M443.6 601.3 L460 601.3"/><path d="M467 654 L467 669"/>
<path d="M463.7 797.5 L478 797.5"/>
<path d="M632.6 723 L731 767"/><path d="M616.4 738.6 L719.7 778.7"/><path d="M590.4 748.7 L598 749.4 L709 794.7"/><path d="M608.8 770.3 L707 812"/><path d="M551 765.8 L701 825.7"/><path d="M500.4 745 L515.6 773.4 L695.7 841.4"/>
<path d="M663.7 849.7 L689.4 856"/><path d="M648.2 884.7 L695.7 884.7"/>
<path d="M691.5 895 L698.8 890.5 L730 799.6 L739.6 796 L732 793 L738.5 776.6"/>
<path d="M707.5 726.3 L731 733"/>
</g>
<!-- ===== labels ===== -->
<circle cx="708.3" cy="573.8" r="14.8" fill="#f2b829"/>
<rect x="372.2" y="580.4" width="12.8" height="15.2" fill="#fff"/><rect x="425.3" y="595" width="18.4" height="14.8" fill="#fff"/><rect x="456.8" y="638.3" width="17" height="16" fill="#fff"/>
<g fill="#101012" text-anchor="middle" stroke="none" transform="translate(.6 .4)">
<text x="516.2" y="166">30</text><text x="587" y="192">24</text><text x="643.5" y="223">26</text><text x="666.5" y="237">26</text><text x="693.5" y="253">29</text><text x="719.5" y="269">28</text><text x="727.5" y="240">2</text>
<text x="393" y="233.5">25</text><text x="516.2" y="472.7">16</text><text x="621.7" y="495.5">15</text><text x="586" y="525">8</text>
<text x="378.7" y="592.6">7</text><text x="434.5" y="606.6">11</text><text x="465.3" y="651.2">12</text>
<text x="708.3" y="578.8">20</text><text x="690.7" y="613.6">21</text><text x="453" y="800">14</text>
<text x="727.6" y="757">1</text><text x="730.5" y="775">5</text><text x="725.5" y="785.6">6</text><text x="716" y="801">4A</text><text x="746.5" y="801">1</text><text x="714" y="817">4</text><text x="710.3" y="832.5">3</text><text x="704.5" y="848">2</text><text x="695.5" y="862.5">13</text><text x="689.3" y="878">14</text>
</g>

</svg>

<table id="pt" cellspacing="2" cellpadding="0">
<colgroup><col style="width:48px"><col style="width:27px"><col style="width:146px"><col style="width:198px"><col style="width:194px"><col style="width:37px"><col style="width:59px"></colgroup>
<tr class="h"><th>POS</th><th></th><th>PART NUMBER</th><th>DESCRIPTION</th><th>REMARK</th><th>QTY</th><th>MODEL</th></tr>
<tr class="g" style="height:32px"><td class="c"></td><td></td><td class="pn"></td><td>additional brake light</td><td>&nbsp;</td><td></td><td></td></tr>
<tr class="r" style="height:49px"><td class="c">15</td><td></td><td class="pn">8P4&nbsp;945&nbsp;097&nbsp;A</td><td>additional brake light<br>for vehicles with spoiler</td><td>&nbsp;</td><td>1</td><td></td></tr>
<tr class="r" style="height:66px"><td class="c">(16)</td><td></td><td class="pn"></td><td>adapter wiring set for<br>high mounted brake light<br><span class="ra">see illustration:</span></td><td>&nbsp;<br>&nbsp;<br>972-84</td><td></td><td>PR-5J4</td></tr>
<tr class="r" style="height:32px"><td class="c"></td><td></td><td class="pn"></td><td>&nbsp;</td><td>&nbsp;</td><td></td><td></td></tr>
<tr class="g" style="height:32px"><td class="c"></td><td></td><td class="pn"></td><td>licence plate light</td><td>&nbsp;</td><td></td><td></td></tr>
<tr class="r" style="height:32px"><td class="c">20</td><td></td><td class="pn">8E0&nbsp;943&nbsp;021&nbsp;B</td><td>licence plate light</td><td>left</td><td>1</td><td></td></tr>
<tr class="r" style="height:32px"><td class="c">(20)</td><td></td><td class="pn">8E0&nbsp;943&nbsp;022&nbsp;B</td><td>licence plate light</td><td>right</td><td>1</td><td></td></tr>
<tr class="r" style="height:32px"><td class="c">21</td><td></td><td class="pn">N&nbsp;&nbsp;&nbsp;017&nbsp;725&nbsp;2</td><td>bulb</td><td>C5W-12V5W</td><td>2</td><td></td></tr>
<tr class="r" style="height:32px"><td class="c"></td><td></td><td class="pn"></td><td>&nbsp;</td><td>&nbsp;</td><td></td><td></td></tr>
<tr class="g" style="height:49px"><td class="c"></td><td></td><td class="pn"></td><td>tail lights with reversing<br>and fog lights</td><td>&nbsp;</td><td></td><td></td></tr>
<tr class="r" style="height:32px"><td class="c">23</td><td></td><td class="pn">8P4&nbsp;945&nbsp;093&nbsp;D</td><td>tail light</td><td>left</td><td>1</td><td></td></tr>
<tr class="r" style="height:32px"><td class="c">(23)</td><td></td><td class="pn">8P4&nbsp;945&nbsp;094&nbsp;D</td><td>tail light</td><td>right</td><td>1</td><td></td></tr>
<tr class="r" style="height:32px"><td class="c">24</td><td></td><td class="pn">8P4&nbsp;945&nbsp;257&nbsp;C</td><td>bulb carrier</td><td>left</td><td>1</td><td></td></tr>
<tr class="r" style="height:32px"><td class="c">(24)</td><td></td><td class="pn">8P4&nbsp;945&nbsp;258&nbsp;C</td><td>bulb carrier</td><td>right</td><td>1</td><td></td></tr>
<tr class="r" style="height:49px"><td class="c">26</td><td></td><td class="pn">N&nbsp;&nbsp;&nbsp;104&nbsp;456&nbsp;02</td><td>halogen bulb 'longlife'<br>for rear fog light</td><td>H21W-12V21W</td><td>1</td><td></td></tr>
<tr class="r" style="height:66px"><td class="c">-</td><td></td><td class="pn">4F5&nbsp;945&nbsp;231</td><td>bulb carrier<br>adapter<br>for rear fog light</td><td>&nbsp;</td><td>1</td><td></td></tr>
<tr class="r" style="height:49px"><td class="c">(26)</td><td></td><td class="pn">N&nbsp;&nbsp;&nbsp;105&nbsp;915&nbsp;01</td><td>bulb<br>for back-up light</td><td>W16W-12V</td><td>2</td><td></td></tr>
<tr class="r" style="height:32px"><td class="c">27</td><td></td><td class="pn">8P4&nbsp;945&nbsp;567</td><td>support element</td><td>left a. right</td><td>2</td><td></td></tr>
<tr class="r" style="height:32px"><td class="c">28</td><td></td><td class="pn">N&nbsp;&nbsp;&nbsp;103&nbsp;400&nbsp;04</td><td>hex. nut with washer</td><td>M6</td><td>2</td><td></td></tr>
<tr class="r" style="height:32px"><td class="c">29</td><td></td><td class="pn">8P4&nbsp;945&nbsp;191&nbsp;A</td><td>seal</td><td>left</td><td>1</td><td></td></tr>
<tr class="r" style="height:32px"><td class="c">(29)</td><td></td><td class="pn">8P4&nbsp;945&nbsp;192&nbsp;A</td><td>seal</td><td>right</td><td>1</td><td></td></tr>
<tr class="r" style="height:49px"><td class="c">30</td><td></td><td class="pn">3B0&nbsp;972&nbsp;724</td><td>flat contact housing with<br>contact locking mechanism</td><td>8 pin</td><td>1</td><td></td></tr>
</table>
<div id="selrow" class="abs"></div>
<div id="tfoot" class="abs"></div>
<div id="sbt" class="abs"></div>
<div class="sbb" style="top:83px"><svg width="13" height="13" viewBox="0 0 13 13" style="display:block"><path d="M3 8 L6.5 4.5 L10 8" fill="none" stroke="#4d6185" stroke-width="2"/></svg></div>
<div id="sth" class="abs"><svg width="11" height="8" viewBox="0 0 11 8" style="position:absolute;left:0;top:250px"><path d="M3 1h6M3 3h6M3 5h6M3 7h6" stroke="#eef3ff" stroke-width="1"/></svg></div>
<div class="sbb" style="top:998px"><svg width="13" height="13" viewBox="0 0 13 13" style="display:block"><path d="M3 5 L6.5 8.5 L10 5" fill="none" stroke="#4d6185" stroke-width="2"/></svg></div>

<div id="dlg" class="abs"><div id="dtitle" class="abs"><span>Search</span>
<div class="wb" style="left:403px;background:linear-gradient(135deg,#4a8af0,#1c56d8 50%,#1446c0)"><svg width="19" height="19" viewBox="0 0 19 19" style="display:block"><text x="9.5" y="15.5" text-anchor="middle" font-family="Liberation Sans,sans-serif" font-size="17" fill="#fff" font-weight="normal">?</text></svg></div>
<div class="wb" style="left:426px;background:linear-gradient(135deg,#e8744f,#d8482a 50%,#b8321a)"><svg width="19" height="19" viewBox="0 0 19 19" style="display:block"><path d="M4.5 4.5 L14.5 14.5 M14.5 4.5 L4.5 14.5" stroke="#fff" stroke-width="2.3" stroke-linecap="butt"/></svg></div>
</div><div id="dcli" class="abs"></div></div>
<div class="tab" style="left:744px;top:227px;width:93px">TERM</div>
<div class="tab" style="left:839px;top:227px;width:151px">PART NUMBER</div>
<div class="tab" style="left:992px;top:227px;width:175px">PARTS IDENTIFIER</div>
<div class="tab" style="left:744px;top:248px;width:193px">BASE PART NUMBER</div>
<div class="tab" style="left:1039px;top:248px;width:128px">SDC-CODE</div>
<div id="tabsel" class="abs">ATP</div>
<div id="pnl" class="abs"></div>
<div class="abs" style="left:751px;top:283px;color:#3352a6;font-size:13px;line-height:16px;letter-spacing:.1px;white-space:nowrap">Part Number</div>
<div id="cmb" class="abs">8E0943021B<i class="dd" style="right:1px;top:1px"></i></div>
<div class="rad" style="top:354px"></div><div class="rl" style="top:352px">Current Model</div>
<div class="rad" style="top:376px"><i style="position:absolute;left:2.5px;top:2.5px;width:4px;height:4px;border-radius:50%;background:#111"></i></div><div class="rl" style="top:374px">All Models</div>
<div class="rad" style="top:398px"></div><div class="rl" style="top:396px">All Brands</div>
<div id="srh" class="abs">SEARCH RESULTS  ( 25 HITS )</div>
<div id="lst" class="abs">
<div class="li s" style="top:0px"><b class="a">A3</b><b class="b">2004&gt;&gt;2007</b><b class="c">Audi A3/S3/Sportback/qu.</b></div>
<div class="li" style="top:20px"><b class="a">A3</b><b class="b">2008&gt;&gt;2008</b><b class="c">Audi A3/S3/Sportback/qu.</b></div>
<div class="li" style="top:40px"><b class="a">A3</b><b class="b">2009&gt;&gt;2013</b><b class="c">Audi A3/S3/Sportback/qu.</b></div>
<div class="li" style="top:60px"><b class="a">A3CA</b><b class="b">2008&gt;&gt;</b><b class="c">Audi A3 Cabriolet</b></div>
<div class="li" style="top:80px"><b class="a">A4</b><b class="b">2001&gt;&gt;2005</b><b class="c">Audi A4/Avant</b></div>
<div class="li" style="top:100px"><b class="a">A4</b><b class="b">2005&gt;&gt;2008</b><b class="c">Audi A4/Avant</b></div>
<div class="li" style="top:120px"><b class="a">A4Q</b><b class="b">2001&gt;&gt;2005</b><b class="c">Audi A4/S4/Avant/quattro</b></div>
<div class="li" style="top:140px"><b class="a">A4Q</b><b class="b">2005&gt;&gt;2008</b><b class="c">Audi A4/S4/Avant/quattro</b></div>
<div class="li" style="top:160px"><b class="a">A5CA</b><b class="b">2010&gt;&gt;2011</b><b class="c">Audi A5/S5 Cabriolet</b></div>
<div class="li" style="top:180px"><b class="a">A6</b><b class="b">2005&gt;&gt;2008</b><b class="c">Audi A6/Avant</b></div>
<div class="li" style="top:200px"><b class="a">A6</b><b class="b">2009&gt;&gt;2011</b><b class="c">Audi A6/Avant</b></div>
<div class="li" style="top:220px"><b class="a">A6AR</b><b class="b">2007&gt;&gt;2011</b><b class="c">Audi A6 allroad quattro</b></div>
</div>
<div id="lsb" class="abs"></div>
<div class="sbb2" style="top:446px"><svg width="13" height="13" viewBox="0 0 13 13" style="display:block"><path d="M3 8 L6.5 4.5 L10 8" fill="none" stroke="#4d6185" stroke-width="2"/></svg></div>
<div class="sbb2" style="top:462px;height:87px;left:1154px;width:13px;background:linear-gradient(90deg,#cad8fd,#bdcdf9)"><svg width="11" height="8" viewBox="0 0 11 8" style="position:absolute;left:0;top:38px"><path d="M3 1h6M3 3h6M3 5h6M3 7h6" stroke="#eef3ff" stroke-width="1"/></svg></div>
<div class="sbb2" style="top:661px"><svg width="13" height="13" viewBox="0 0 13 13" style="display:block"><path d="M3 5 L6.5 8.5 L10 5" fill="none" stroke="#4d6185" stroke-width="2"/></svg></div>
<div class="btn" style="left:960px;top:700px;width:210px;height:25px;line-height:23px"><u>S</u>EARCH</div>
<div class="btn" style="left:743px;top:739px;width:206px;height:22px;line-height:21px"><u>C</u>HOICE</div>
<div class="btn" style="left:962px;top:739px;width:206px;height:22px;line-height:21px"><u>B</u>ACK</div>

</body>
</html>
